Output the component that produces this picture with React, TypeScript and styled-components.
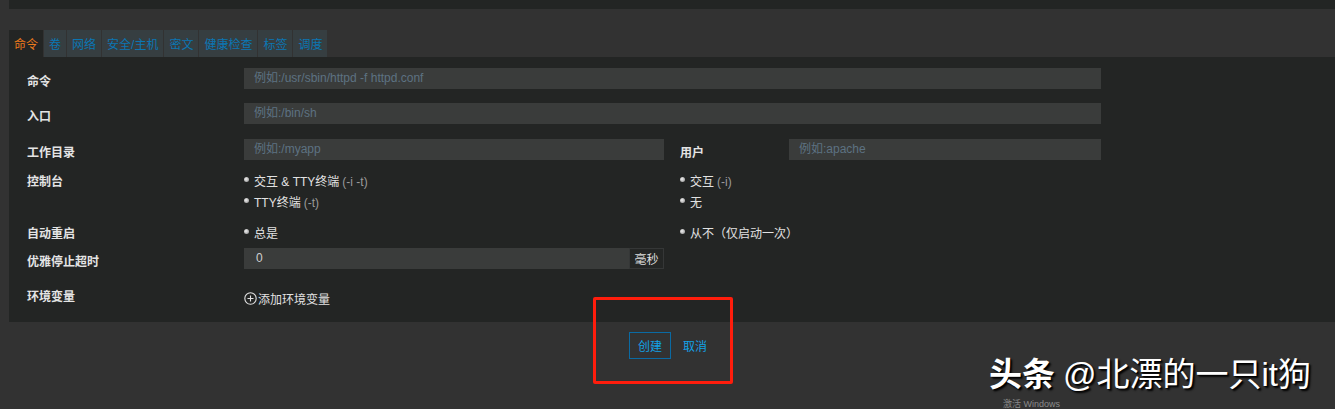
import styled, { createGlobalStyle } from 'styled-components';

const GlobalStyle = createGlobalStyle`
  html, body {
    margin: 0;
    padding: 0;
    background: #323232;
    height: 409px;
    overflow: hidden;
  }
  body {
    font-family: 'Liberation Sans', 'Noto Sans CJK SC', sans-serif;
    font-size: 12px;
    color: #dcdcdc;
  }
`;

const Page = styled.div`
  position: relative;
  height: 409px;
  padding-left: 9px;
  box-sizing: border-box;
`;

const TopStrip = styled.div`
  height: 9px;
  background: #232524;
`;

const TabBar = styled.div`
  display: flex;
  margin-top: 21px;
  height: 27px;
`;

const Tab = styled.div<{ $active?: boolean }>`
  display: flex;
  align-items: center;
  padding: 0 5px;
  margin-right: 1px;
  background: ${({ $active }) => ($active ? '#232524' : '#363e41')};
  color: ${({ $active }) => ($active ? '#ee7b1c' : '#0b76b3')};
  white-space: nowrap;
  font-size: 12px;
`;

const Panel = styled.div`
  background: #232524;
  padding: 11px 0 13px 18px;
  display: flex;
  flex-direction: column;
`;

const Row = styled.div<{ $gap?: number }>`
  display: grid;
  grid-template-columns: 217px 420px 16px 109px 312px;
  margin-bottom: ${({ $gap }) => $gap ?? 0}px;
  align-items: start;
`;

const Label = styled.div<{ $shift?: boolean }>`
  font-weight: 700;
  color: #e4e4e4;
  height: 21px;
  box-sizing: border-box;
  line-height: 21px;
  padding-top: ${({ $shift }) => ($shift ? 4 : 0)}px;
  white-space: nowrap;
`;

const SideLabel = styled(Label)`
  grid-column: 4;
`;

const Input = styled.div<{ $wide?: boolean; $value?: boolean }>`
  grid-column: ${({ $wide }) => ($wide ? '2 / -1' : 'auto')};
  height: 21px;
  line-height: 21px;
  background: #3a3c3b;
  color: ${({ $value }) => ($value ? '#cfcfcf' : '#5d7282')};
  padding-left: 10px;
  box-sizing: border-box;
  white-space: nowrap;
  overflow: hidden;
`;

const InputGroup = styled.div`
  display: flex;
  height: 21px;
`;

const GroupInput = styled(Input)`
  flex: 1;
  padding-left: 12px;
`;

const Addon = styled.div`
  width: 35px;
  box-sizing: border-box;
  border: 1px solid #353737;
  background: #242625;
  color: #dcdcdc;
  display: flex;
  align-items: center;
  justify-content: center;
`;

const RadioColumn = styled.div<{ $right?: boolean }>`
  grid-column: ${({ $right }) => ($right ? '4 / -1' : '2 / 4')};
  display: flex;
  flex-direction: column;
`;

const Radio = styled.div`
  display: flex;
  height: 21px;
  line-height: 21px;
  color: #e2e2e2;
  white-space: nowrap;
`;

const Dot = styled.span`
  width: 5px;
  height: 5px;
  border-radius: 50%;
  margin: 5px 5px 0 0;
  background: radial-gradient(circle at 40% 40%, #f0f0f0 0, #a8a8a8 70%, #777 100%);
  flex-shrink: 0;
`;

const Hint = styled.span`
  color: #9a9a9a;
  margin-left: 3px;
`;

const AddLink = styled.div`
  grid-column: 2 / 4;
  display: flex;
  align-items: center;
  height: 22px;
  color: #e2e2e2;
  gap: 1px;
`;

const Actions = styled.div`
  display: flex;
  justify-content: center;
  align-items: center;
  gap: 12px;
  margin-top: 10px;
  padding-right: 8px;
`;

const Button = styled.div<{ $outlined?: boolean }>`
  height: 27px;
  box-sizing: border-box;
  padding: 0 ${({ $outlined }) => ($outlined ? 8 : 0)}px;
  border: ${({ $outlined }) => ($outlined ? '1px solid #0a6aa3' : 'none')};
  color: #12a1e6;
  display: flex;
  align-items: center;
`;

const Highlight = styled.div`
  position: absolute;
  left: 593px;
  top: 297px;
  width: 140px;
  height: 87px;
  border: 3px solid #ff1d0c;
  border-radius: 2px;
  box-sizing: border-box;
`;

const Watermark = styled.div`
  position: absolute;
  left: 989px;
  top: 357px;
  font-family: 'Liberation Sans', 'Noto Sans CJK SC', sans-serif;
  font-size: 33px;
  line-height: 36px;
  color: #ffffff;
  white-space: nowrap;
  text-shadow: 2px 2px 2px #000, 1px 1px 0 #111;
`;

const Brand = styled.span`
  font-weight: 700;
  margin-right: 8px;
`;

const Activate = styled.div`
  position: absolute;
  left: 1003px;
  top: 399px;
  font-family: 'Liberation Sans', 'Noto Sans CJK SC', sans-serif;
  font-size: 9px;
  line-height: 10px;
  color: #8a8a8a;
  white-space: nowrap;
`;

const tabs = ['命令', '卷', '网络', '安全/主机', '密文', '健康检查', '标签', '调度'];

export default function App() {
  return (
    <>
      <GlobalStyle />
      <Page>
        <TopStrip />
        <TabBar>
          {tabs.map((t, i) => (
            <Tab key={t} $active={i === 0}>
              {t}
            </Tab>
          ))}
        </TabBar>
        <Panel>
          <Row $gap={14}>
            <Label $shift>命令</Label>
            <Input $wide>例如:/usr/sbin/httpd -f httpd.conf</Input>
          </Row>
          <Row $gap={15}>
            <Label $shift>入口</Label>
            <Input $wide>例如:/bin/sh</Input>
          </Row>
          <Row $gap={12}>
            <Label $shift>工作目录</Label>
            <Input>例如:/myapp</Input>
            <span />
            <SideLabel $shift>用户</SideLabel>
            <Input>例如:apache</Input>
          </Row>
          <Row $gap={10}>
            <Label>控制台</Label>
            <RadioColumn>
              <Radio>
                <Dot />
                交互 &amp; TTY终端<Hint>(-i -t)</Hint>
              </Radio>
              <Radio>
                <Dot />
                TTY终端<Hint>(-t)</Hint>
              </Radio>
            </RadioColumn>
            <RadioColumn $right>
              <Radio>
                <Dot />
                交互<Hint>(-i)</Hint>
              </Radio>
              <Radio>
                <Dot />
                无
              </Radio>
            </RadioColumn>
          </Row>
          <Row $gap={3}>
            <Label>自动重启</Label>
            <RadioColumn>
              <Radio>
                <Dot />
                总是
              </Radio>
            </RadioColumn>
            <RadioColumn $right>
              <Radio>
                <Dot />
                从不（仅启动一次）
              </Radio>
            </RadioColumn>
          </Row>
          <Row $gap={18}>
            <Label $shift>优雅停止超时</Label>
            <InputGroup>
              <GroupInput $value>0</GroupInput>
              <Addon>毫秒</Addon>
            </InputGroup>
          </Row>
          <Row>
            <Label>环境变量</Label>
            <AddLink>
              <svg width="13" height="13" viewBox="0 0 13 13" fill="none" stroke="#e2e2e2" strokeWidth="1.1">
                <circle cx="6.5" cy="6.5" r="5.7" />
                <path d="M6.5 3.5v6M3.5 6.5h6" />
              </svg>
              添加环境变量
            </AddLink>
          </Row>
        </Panel>
        <Actions>
          <Button $outlined>创建</Button>
          <Button>取消</Button>
        </Actions>
        <Highlight />
        <Watermark>
          <Brand>头条</Brand>@北漂的一只it狗
        </Watermark>
        <Activate>激活 Windows</Activate>
      </Page>
    </>
  );
}
